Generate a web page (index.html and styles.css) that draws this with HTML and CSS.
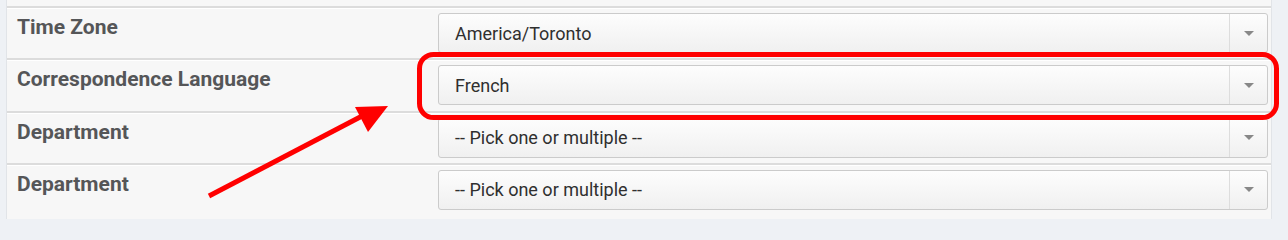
FILE: index.html
```html
<!DOCTYPE html>
<html lang="en">
<head>
<meta charset="utf-8">
<title>Settings</title>
<link rel="stylesheet" href="styles.css">
</head>
<body>
<div class="panel">
  <div class="row">
    <div class="label">Time Zone</div>
    <div class="select"><span class="value">America/Toronto</span><span class="caret"></span></div>
  </div>
  <div class="row">
    <div class="label">Correspondence Language</div>
    <div class="select"><span class="value">French</span><span class="caret"></span></div>
  </div>
  <div class="row">
    <div class="label">Department</div>
    <div class="select"><span class="value">-- Pick one or multiple --</span><span class="caret"></span></div>
  </div>
  <div class="row">
    <div class="label">Department</div>
    <div class="select"><span class="value">-- Pick one or multiple --</span><span class="caret"></span></div>
  </div>
</div>
<svg class="annotation" width="1288" height="219" viewBox="0 0 1288 219" xmlns="http://www.w3.org/2000/svg">
  <rect x="419.5" y="54.5" width="857" height="63" rx="14" ry="14" fill="none" stroke="#ff0000" stroke-width="5"/>
  <line x1="209" y1="196" x2="364" y2="115" stroke="#ff0000" stroke-width="5"/>
  <polygon points="355,107 388,106 368,132" fill="#ff0000"/>
</svg>
</body>
</html>
```
FILE: styles.css
```css
html, body {
  margin: 0;
  padding: 0;
}
html {
  background: #eef1f5;
}
body {
  width: 1288px;
  height: 219px;
  overflow: hidden;
  background: #eef1f5;
  position: relative;
  font-family: Roboto, "Liberation Sans", Arial, sans-serif;
}
.panel {
  margin-left: 6px;
  width: 1266px;
  height: 219px;
  background: #f7f7f7;
  border-left: 1px solid #e1e4e8;
  border-right: 1px solid #e1e4e8;
  padding-top: 6px;
  box-sizing: border-box;
}
.row {
  display: grid;
  grid-template-columns: 431px 830px;
  height: 52.33px;
  box-sizing: border-box;
  border-top: 2px solid #dcdcdc;
  box-shadow: inset 0 1px 0 #ffffff;
}
.label {
  padding-left: 10px;
  padding-top: 7px;
  font-size: 21px;
  font-weight: 700;
  color: #555658;
  line-height: 24px;
}
.select {
  margin-top: 5px;
  height: 40px;
  box-sizing: border-box;
  border: 1px solid #cbcbcb;
  border-radius: 3px;
  background: linear-gradient(#fdfdfd, #f0f0f0);
  display: flex;
  align-items: center;
}
.value {
  flex: 1;
  padding-left: 16px;
  font-size: 18px;
  color: #2f2f2f;
}
.caret {
  width: 37px;
  height: 100%;
  border-left: 1px solid #dddddd;
  display: flex;
  align-items: center;
  justify-content: center;
}
.caret::after {
  content: "";
  width: 0;
  height: 0;
  border-left: 5px solid transparent;
  border-right: 5px solid transparent;
  border-top: 5px solid #888888;
}
.annotation {
  position: absolute;
  left: 0;
  top: 0;
  pointer-events: none;
}
```
